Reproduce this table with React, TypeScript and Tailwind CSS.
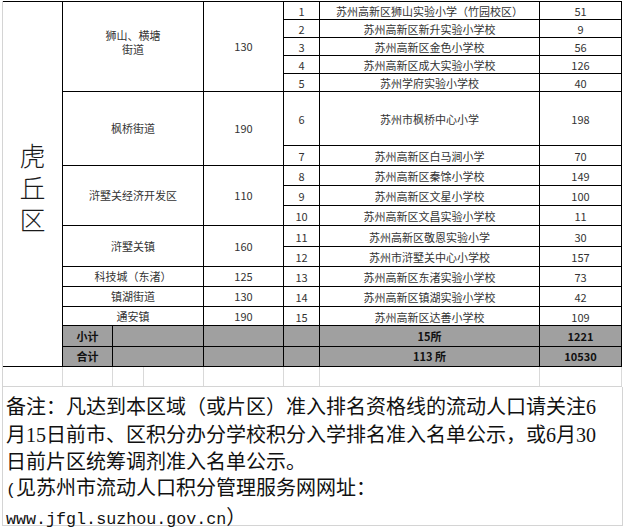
import React from "react";

const rowStart = [
  "row-start-1", "row-start-2", "row-start-3", "row-start-4", "row-start-5",
  "row-start-6", "row-start-7", "row-start-8", "row-start-9", "row-start-10",
  "row-start-11", "row-start-12", "row-start-13", "row-start-14", "row-start-15",
  "row-start-16", "row-start-17",
];

const rowSpan: Record<number, string> = {
  1: "row-span-1",
  2: "row-span-2",
  3: "row-span-3",
  5: "row-span-5",
};

const schools = [
  "苏州高新区狮山实验小学（竹园校区）",
  "苏州高新区新升实验小学校",
  "苏州高新区金色小学校",
  "苏州高新区成大实验小学校",
  "苏州学府实验小学校",
  "苏州市枫桥中心小学",
  "苏州高新区白马涧小学",
  "苏州高新区秦馀小学校",
  "苏州高新区文星小学校",
  "苏州高新区文昌实验小学校",
  "苏州高新区敬恩实验小学",
  "苏州市浒墅关中心小学校",
  "苏州高新区东渚实验小学校",
  "苏州高新区镇湖实验小学校",
  "苏州高新区达善小学校",
];

const counts = [51, 9, 56, 126, 40, 198, 70, 149, 100, 11, 30, 157, 73, 42, 109];

const streets: { start: number; span: number; name: React.ReactNode; quota: number }[] = [
  {
    start: 0,
    span: 5,
    name: (
      <span className="flex flex-col items-center pb-[10px]">
        <span className="block leading-[14px]">狮山、横塘</span>
        <span className="block leading-[14px]">街道</span>
      </span>
    ),
    quota: 130,
  },
  { start: 5, span: 2, name: "枫桥街道", quota: 190 },
  { start: 7, span: 3, name: "浒墅关经济开发区", quota: 110 },
  { start: 10, span: 2, name: "浒墅关镇", quota: 160 },
  { start: 12, span: 1, name: "科技城（东渚）", quota: 125 },
  { start: 13, span: 1, name: "镇湖街道", quota: 130 },
  { start: 14, span: 1, name: "通安镇", quota: 190 },
];

const cell = "bg-white flex items-center justify-center text-center";

function D({ children }: { children: React.ReactNode }) {
  return <span className="font-['Liberation_Serif',serif] text-[20px]">{children}</span>;
}

function M({ children }: { children: React.ReactNode }) {
  return <span className="font-['Liberation_Mono',monospace] text-[16.7px]">{children}</span>;
}

export default function App() {
  return (
    <div className="w-[624px] h-[530px] bg-white overflow-hidden pt-px pl-[2px] font-['Noto_Sans_CJK_SC','Noto_Sans',sans-serif]">
      <div className="w-[620px] border-l border-[#d4d4d4]">
        <div className="grid gap-px bg-black pt-px pr-px pb-px grid-cols-[59px_49px_90px_79px_35px_219px_81px] grid-rows-[17px_17px_17px_17px_17px_53px_19px_19px_19px_19px_20px_19px_19px_19px_18px_20px_19px] text-[11px] text-[#333]">
          <div className={`${cell} col-start-1 row-start-1 row-span-17 pt-[5px]`}>
            <span className="text-[26px] leading-[32px] text-[#1a1a1a] font-light w-[26px] break-all">虎丘区</span>
          </div>

          {streets.map((s) => (
            <React.Fragment key={s.start}>
              <div className={`${cell} col-start-2 col-span-2 ${rowStart[s.start]} ${rowSpan[s.span]}`}>
                {s.name}
              </div>
              <div className={`${cell} col-start-4 ${rowStart[s.start]} ${rowSpan[s.span]}`}>{s.quota}</div>
            </React.Fragment>
          ))}

          {schools.map((name, i) => (
            <React.Fragment key={i}>
              <div className={`${cell} col-start-5 ${rowStart[i]} pt-[2px]`}>{i + 1}</div>
              <div className={`${cell} col-start-6 ${rowStart[i]} pt-[2px]`}>{name}</div>
              <div className={`${cell} col-start-7 ${rowStart[i]} pt-[2px]`}>{counts[i]}</div>
            </React.Fragment>
          ))}

          <div className="bg-[#a0a0a0] flex items-center justify-center col-start-2 row-start-16 font-bold text-[#111]">小计</div>
          <div className="bg-[#a0a0a0] col-start-3 row-start-16" />
          <div className="bg-[#a0a0a0] col-start-4 row-start-16" />
          <div className="bg-[#a0a0a0] col-start-5 row-start-16" />
          <div className="bg-[#a0a0a0] flex items-center justify-center col-start-6 row-start-16 font-bold text-[#111]">15所</div>
          <div className="bg-[#a0a0a0] flex items-center justify-center col-start-7 row-start-16 font-bold text-[#111]">1221</div>

          <div className="bg-[#a0a0a0] flex items-center justify-center col-start-2 row-start-17 font-bold text-[#111]">合计</div>
          <div className="bg-[#a0a0a0] col-start-3 row-start-17" />
          <div className="bg-[#a0a0a0] col-start-4 row-start-17" />
          <div className="bg-[#a0a0a0] col-start-5 row-start-17" />
          <div className="bg-[#a0a0a0] flex items-center justify-center col-start-6 row-start-17 font-bold text-[#111]">113 所</div>
          <div className="bg-[#a0a0a0] flex items-center justify-center col-start-7 row-start-17 font-bold text-[#111]">10530</div>
        </div>

        <div className="flex h-[20px] border-b border-[#d4d4d4]">
          <div className="w-[60px] border-r border-[#d9d9d9]" />
          <div className="w-[50px] border-r border-[#d9d9d9]" />
          <div className="w-[31px] border-r border-[#d9d9d9]" />
          <div className="w-[60px] border-r border-[#d9d9d9]" />
          <div className="w-[80px] border-r border-[#d9d9d9]" />
          <div className="w-[36px] border-r border-[#d9d9d9]" />
          <div className="w-[220px] border-r border-[#d9d9d9]" />
          <div className="w-[82px] border-r border-[#d9d9d9]" />
        </div>

        <div className="w-[620px] h-[139px] border-r border-b border-[#d4d4d4] pl-[3px] pt-[6px] text-[20px] leading-[25.5px] text-[#111] whitespace-nowrap">
          <div>
            备注：凡达到本区域（或片区）准入排名资格线的流动人口请关注<D>6</D>
          </div>
          <div>
            月<D>15</D>日前市、区积分办分学校积分入学排名准入名单公示，或<D>6</D>月<D>30</D>
          </div>
          <div>日前片区统筹调剂准入名单公示。</div>
          <div>
            <M>(</M>见苏州市流动人口积分管理服务网网址：
          </div>
          <div>
            <M>www.jfgl.suzhou.gov.cn</M>）
          </div>
        </div>
      </div>
    </div>
  );
}
